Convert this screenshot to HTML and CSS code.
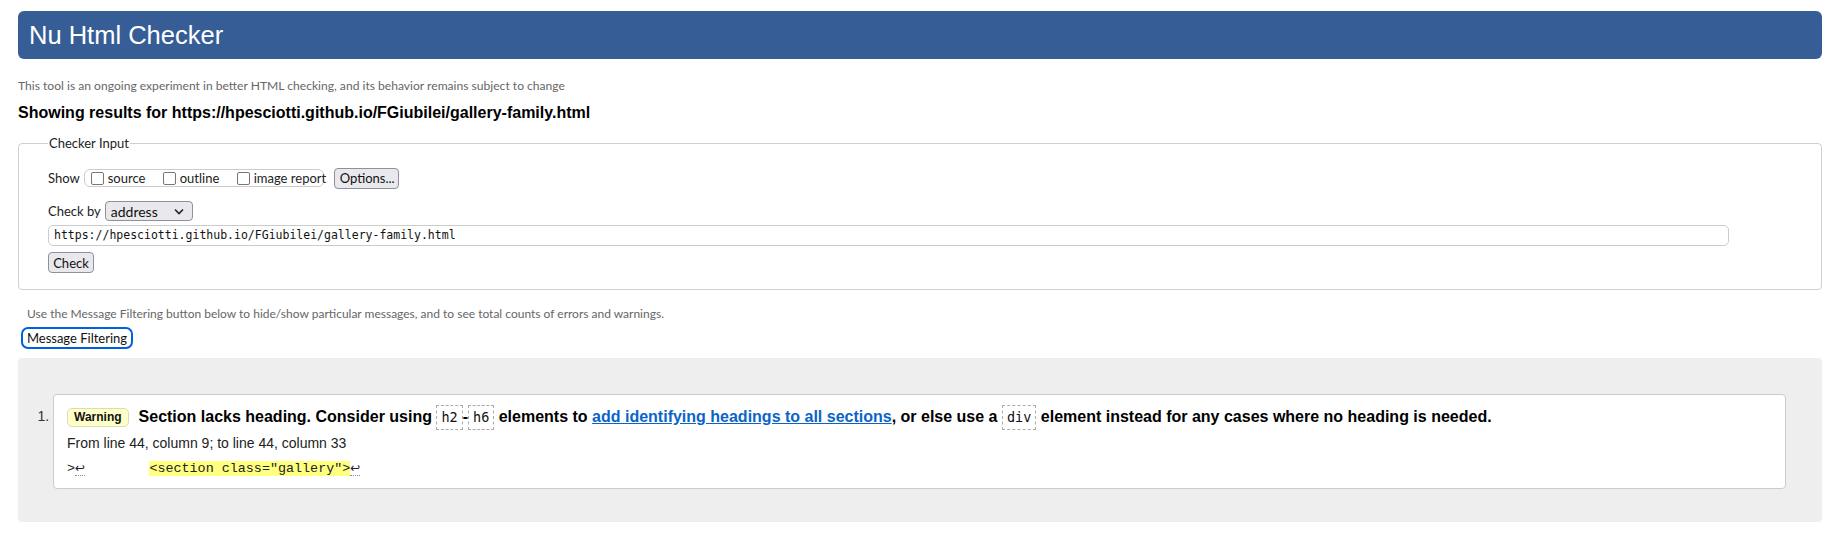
FILE: index.html
```html
<!DOCTYPE html>
<html lang="en">
<head>
<meta charset="utf-8">
<title>Showing results for https://hpesciotti.github.io/FGiubilei/gallery-family.html - Nu Html Checker</title>
<link rel="stylesheet" href="styles.css">
</head>
<body>
<h1 class="title">Nu Html Checker</h1>
<p class="tip">This tool is an ongoing experiment in better HTML checking, and its behavior remains subject to change</p>
<h2 class="results-for">Showing results for https://hpesciotti.github.io/FGiubilei/gallery-family.html</h2>

<form class="checker">
  <fieldset class="checker-input">
    <legend class="legend">Checker Input</legend>
    <div class="row show-row">
      <span class="label">Show</span>
      <span class="opts">
        <label class="opt opt-source"><input type="checkbox" class="cb"><span>source</span></label>
        <label class="opt opt-outline"><input type="checkbox" class="cb"><span>outline</span></label>
        <label class="opt"><input type="checkbox" class="cb"><span>image report</span></label>
      </span>
      <button type="button" class="btn options-btn">Options...</button>
    </div>
    <div class="row checkby-row">
      <span class="label">Check by</span>
      <span class="select-wrap">
        <span class="select-text">address</span>
        <svg class="chev" width="10" height="7" viewBox="0 0 10 7"><path d="M1 1.5 L5 5.5 L9 1.5" fill="none" stroke="#222" stroke-width="1.6"/></svg>
      </span>
    </div>
    <div class="url-box">https://hpesciotti.github.io/FGiubilei/gallery-family.html</div>
    <div class="row">
      <button type="button" class="btn check-btn">Check</button>
    </div>
  </fieldset>
</form>

<p class="filter-tip">Use the Message Filtering button below to hide/show particular messages, and to see total counts of errors and warnings.</p>
<button type="button" class="filter-btn">Message Filtering</button>

<div class="results">
  <ol class="messages">
    <li class="msg">
      <p class="msg-head"><span class="badge">Warning</span><span class="msg-text">Section lacks heading. Consider using <code class="tag">h2</code>-<code class="tag">h6</code> elements to <a class="link" href="#">add identifying headings to all sections</a>, or else use a <code class="tag">div</code> element instead for any cases where no heading is needed.</span></p>
      <p class="location">From line 44, column 9; to line 44, column 33</p>
      <p class="extract"><code class="ext">&gt;<b class="lf">↩</b>        <b class="hl">&lt;section class="gallery"&gt;</b><b class="lf">↩</b></code></p>
    </li>
  </ol>
</div>
</body>
</html>
```
FILE: styles.css
```css
html, body {
  background: #ffffff;
}
body {
  margin: 11px 19px 13px 18px;
  font-family: "Liberation Sans", Arial, sans-serif;
  color: #000;
}

.title {
  margin: 0;
  height: 48px;
  line-height: 48px;
  padding-left: 11px;
  background: #365d95;
  color: #fff;
  font-weight: normal;
  font-size: 25.5px;
  border-radius: 6px;
}

.tip {
  margin: 19px 0 0 0;
  font-family: Lato, "Open Sans", sans-serif;
  font-size: 12.1px;
  line-height: 15px;
  color: #666;
}

.results-for {
  margin: 10px 0 0 0;
  font-size: 16px;
  line-height: 19px;
  font-weight: bold;
}

.checker {
  margin: 13px 0 0 0;
}

.checker-input {
  margin: 0;
  border: 1px solid #cfcfcf;
  border-radius: 4px;
  padding: 4px 28px 16px 29px;
  font-family: Lato, "Open Sans", sans-serif;
  font-size: 13px;
  color: #222;
}

.legend {
  margin-left: 0;
  padding: 0 1px;
  font-size: 13px;
  line-height: 16px;
  color: #222;
}

.row {
  display: flex;
  align-items: center;
}

.show-row {
  height: 22px;
  margin-top: 12px;
}

.label {
  margin-right: 4px;
  white-space: nowrap;
}

.opts {
  display: flex;
  align-items: center;
  height: 18px;
  box-sizing: border-box;
  border: 1px solid #cccccc;
  border-radius: 6px;
  padding: 0 4px 0 6px;
  width: 240px;
  white-space: nowrap;
}

.opt {
  display: flex;
  align-items: center;
  flex: none;
}
.opt-source {
  width: 72px;
}
.opt-outline {
  width: 74px;
}

.cb {
  appearance: none;
  -webkit-appearance: none;
  width: 13px;
  height: 13px;
  margin: 0 4px 0 0;
  border: 1px solid #767676;
  border-radius: 2px;
  background: #fff;
  box-sizing: border-box;
}

.btn {
  font-family: Lato, "Open Sans", sans-serif;
  font-size: 13px;
  color: #111;
  background: #e9e9ed;
  border: 1px solid #8f8f9d;
  border-radius: 4px;
  height: 21px;
  padding: 0 5px;
  box-sizing: border-box;
}

.options-btn {
  margin-left: 10px;
  width: 65px;
}

.checkby-row {
  margin-top: 12px;
  height: 20px;
}

.select-wrap {
  display: flex;
  align-items: center;
  justify-content: space-between;
  width: 88px;
  height: 20px;
  box-sizing: border-box;
  border: 1px solid #8f8f9d;
  border-radius: 4px;
  background: #e9e9ed;
  padding: 0 8px 0 5px;
  font-size: 14px;
  color: #111;
}

.url-box {
  margin-top: 4px;
  width: 1681px;
  height: 21px;
  box-sizing: border-box;
  border: 1px solid #cccccc;
  border-radius: 5px;
  padding: 0 5px;
  font-family: "DejaVu Sans Mono", "Liberation Mono", monospace;
  font-size: 11.5px;
  line-height: 19px;
  color: #111;
}

.check-btn {
  margin-top: 6px;
  width: 46px;
  padding: 0;
}

.filter-tip {
  margin: 16px 0 0 9px;
  font-family: Lato, "Open Sans", sans-serif;
  font-size: 12px;
  line-height: 15px;
  color: #666;
}

.filter-btn {
  display: block;
  margin: 6px 0 0 3px;
  width: 112px;
  height: 22px;
  box-sizing: border-box;
  padding: 0;
  background: #fff;
  border: 2px solid #0060df;
  border-radius: 7px;
  font-family: Lato, "Open Sans", sans-serif;
  font-size: 13px;
  color: #111;
}

.results {
  margin-top: 9px;
  background: #eeeeee;
  border-radius: 4px;
  padding: 36px 36px 33px 35px;
}

.messages {
  margin: 0;
  padding: 0;
  list-style: decimal outside;
}

.msg {
  background: #fff;
  border: 1px solid #cccccc;
  border-radius: 4px;
  padding: 9px 14px 11px 13px;
  font-size: 14px;
  color: #333;
}
.msg::marker {
  font-family: "Liberation Sans", Arial, sans-serif;
  font-size: 14px;
  color: #333;
}

.msg-head {
  margin: 0;
  display: flex;
  align-items: center;
  min-height: 25px;
}

.badge {
  flex: none;
  display: inline-block;
  height: 19px;
  line-height: 17px;
  box-sizing: border-box;
  padding: 0 6px;
  margin-right: 10px;
  background: #ffffc8;
  border: 1px solid #dcdcb4;
  border-radius: 5px;
  font-size: 12px;
  font-weight: bold;
  color: #111;
}

.msg-text {
  font-size: 16px;
  font-weight: bold;
  color: #000;
  line-height: 25px;
}

.tag {
  display: inline-block;
  font-family: "DejaVu Sans Mono", "Liberation Mono", monospace;
  font-weight: normal;
  font-size: 13.5px;
  line-height: 23px;
  padding: 0 4px;
  border: 1px dashed #aaaaaa;
  margin: 0;
  vertical-align: middle;
  color: #111;
}

.link {
  color: #0a64c8;
  text-decoration: underline;
}

.location {
  margin: 4px 0 0 0;
  font-size: 14px;
  line-height: 18px;
  color: #222;
}

.extract {
  margin: 7px 0 0 0;
  line-height: 17px;
}

.ext {
  font-family: "Liberation Mono", "DejaVu Sans Mono", monospace;
  font-size: 13.4px;
  white-space: pre;
  color: #222;
}

.lf {
  font-family: "DejaVu Sans", sans-serif;
  font-size: 12px;
  font-weight: normal;
  border-bottom: 1px dotted #888;
}

.hl {
  font-weight: normal;
  background: #ffff80;
}
```
